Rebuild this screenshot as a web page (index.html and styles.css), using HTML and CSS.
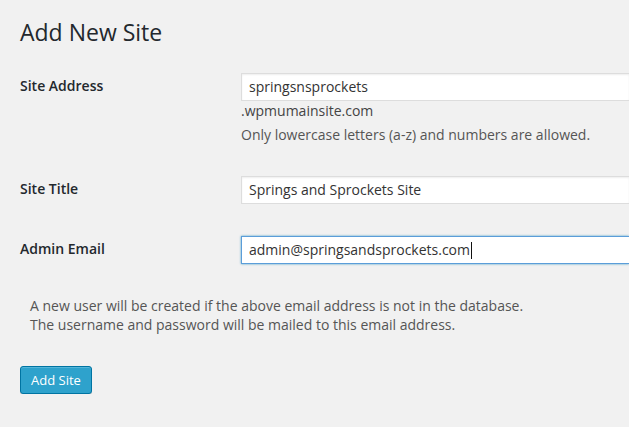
FILE: index.html
```html
<!DOCTYPE html>
<html lang="en">
<head>
<meta charset="utf-8">
<title>Add New Site</title>
<link rel="stylesheet" href="styles.css">
</head>
<body>
<div class="wrap">
  <h1 class="title">Add New Site</h1>
  <form class="form">
    <div class="row row-address">
      <label class="label">Site Address</label>
      <div class="control">
        <div class="field">springsnsprockets</div>
        <div class="suffix">.wpmumainsite.com</div>
        <p class="description">Only lowercase letters (a-z) and numbers are allowed.</p>
      </div>
    </div>
    <div class="row row-title">
      <label class="label">Site Title</label>
      <div class="control">
        <div class="field">Springs and Sprockets Site</div>
      </div>
    </div>
    <div class="row row-email">
      <label class="label">Admin Email</label>
      <div class="control">
        <div class="field focused">admin@springsandsprockets.com<span class="caret"></span></div>
      </div>
    </div>
    <p class="note">A new user will be created if the above email address is not in the database.<br>The username and password will be mailed to this email address.</p>
    <div class="submit">
      <button type="button" class="button-primary">Add Site</button>
    </div>
  </form>
</div>
</body>
</html>
```
FILE: styles.css
```css
html, body {
  margin: 0;
  padding: 0;
}
body {
  background: #f1f1f1;
  color: #444;
  font-family: "Open Sans", "Noto Sans", sans-serif;
  font-size: 13px;
  overflow: hidden;
}
.wrap {
  padding-left: 20px;
}
.title {
  margin: 18px 0 0;
  font-size: 23px;
  font-weight: 400;
  line-height: 29px;
  color: #23282d;
}
.form {
  margin-top: 26px;
}
.row {
  display: grid;
  grid-template-columns: 221px 1fr;
  align-items: start;
}
.row-title {
  margin-top: 32px;
}
.row-email {
  margin-top: 32px;
}
.label {
  font-size: 14px;
  font-weight: 600;
  color: #23282d;
  line-height: 28px;
  margin-top: -1px;
}
.control {
  min-width: 0;
}
.field {
  box-sizing: border-box;
  height: 28px;
  width: 100%;
  background: #fff;
  border: 1px solid #ddd;
  border-right-width: 0;
  box-shadow: inset 0 1px 2px rgba(0,0,0,.07);
  color: #333;
  font-size: 14px;
  line-height: 26px;
  padding: 0 7px;
  white-space: nowrap;
  overflow: hidden;
}
.field.focused {
  border-color: #5b9dd9;
  box-shadow: 0 0 2px rgba(30,140,190,.8);
}
.caret {
  display: inline-block;
  width: 1px;
  height: 17px;
  background: #111;
  vertical-align: -4px;
  margin-left: 1px;
}
.suffix {
  font-size: 14px;
  line-height: 19.6px;
  color: #444;
}
.description {
  margin: 4px 0 0;
  font-size: 14px;
  line-height: 19.6px;
  color: #555;
}
.note {
  margin: 32px 0 0 10px;
  font-size: 14px;
  line-height: 19px;
  color: #555;
}
.submit {
  margin-top: 32px;
}
.button-primary {
  box-sizing: border-box;
  height: 28px;
  margin: 0;
  padding: 0 10px 1px;
  font-family: "Open Sans", "Noto Sans", sans-serif;
  font-size: 13px;
  line-height: 26px;
  color: #fff;
  background: #2ea2cc;
  border: 1px solid #0074a2;
  border-radius: 3px;
  box-shadow: inset 0 1px 0 rgba(120,200,230,.5), 0 1px 0 rgba(0,0,0,.15);
  cursor: pointer;
}
```
